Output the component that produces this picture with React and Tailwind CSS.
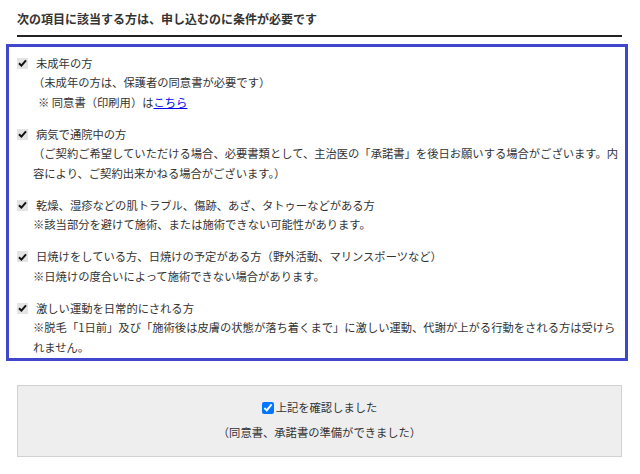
const items = [
  {
    title: '未成年の方',
    lines: [
      '（未成年の方は、保護者の同意書が必要です）',
      <span key="l" className="pl-[5px]">
        ※ 同意書（印刷用）は<a href="#" className="text-[#0000ee] underline">こちら</a>
      </span>,
    ],
  },
  {
    title: '病気で通院中の方',
    lines: [
      '（ご契約ご希望していただける場合、必要書類として、主治医の「承諾書」を後日お願いする場合がございます。内容により、ご契約出来かねる場合がございます。）',
    ],
  },
  {
    title: '乾燥、湿疹などの肌トラブル、傷跡、あざ、タトゥーなどがある方',
    lines: ['※該当部分を避けて施術、または施術できない可能性があります。'],
  },
  {
    title: '日焼けをしている方、日焼けの予定がある方（野外活動、マリンスポーツなど）',
    lines: ['※日焼けの度合いによって施術できない場合があります。'],
  },
  {
    title: '激しい運動を日常的にされる方',
    lines: [
      '※脱毛「1日前」及び「施術後は皮膚の状態が落ち着くまで」に激しい運動、代謝が上がる行動をされる方は受けられません。',
    ],
  },
];

function Check() {
  return (
    <span className="flex h-[11px] w-[11px] shrink-0 items-center justify-center bg-[#e4e4e4]">
      <svg width="9" height="8" viewBox="0 0 9 8" fill="none">
        <path d="M1 4.2 L3.4 6.6 L8 1.4" stroke="#111" strokeWidth="2" />
      </svg>
    </span>
  );
}

export default function App() {
  return (
    <div className="min-h-[474px] bg-white text-[#333] font-['Noto_Sans_CJK_JP','Noto_Sans',sans-serif] text-[11.3px] leading-[19.5px]">
      <div className="ml-[17px] w-[605px] border-b-2 border-[#222] pt-[9px] pb-[6px]">
        <h2 className="text-[12px] font-bold">次の項目に該当する方は、申し込むのに条件が必要です</h2>
      </div>

      <div className="mt-[7px] ml-[6px] w-[622px] border-[3px] border-[#3f48cc] pt-[7px] pb-[1px]">
        <ul className="space-y-[12.5px]">
          {items.map((it, i) => (
            <li key={i}>
              <div className="flex items-center pl-[8px]">
                <Check />
                <span className="ml-[8px]">{it.title}</span>
              </div>
              <div className="pl-[24px] pr-[1px]">
                {it.lines.map((l, j) => (
                  <p key={j}>{l}</p>
                ))}
              </div>
            </li>
          ))}
        </ul>
      </div>

      <div className="mt-[24px] ml-[17px] w-[605px] border border-[#d2d2d2] bg-[#eeeeee] pt-[12px] pb-[14px] text-center">
        <label className="flex items-center justify-center">
          <input type="checkbox" checked readOnly className="h-[12px] w-[12px] accent-[#0075ff]" />
          <span className="ml-[2px]">上記を確認しました</span>
        </label>
        <p className="mt-[5px]">（同意書、承諾書の準備ができました）</p>
      </div>
    </div>
  );
}
